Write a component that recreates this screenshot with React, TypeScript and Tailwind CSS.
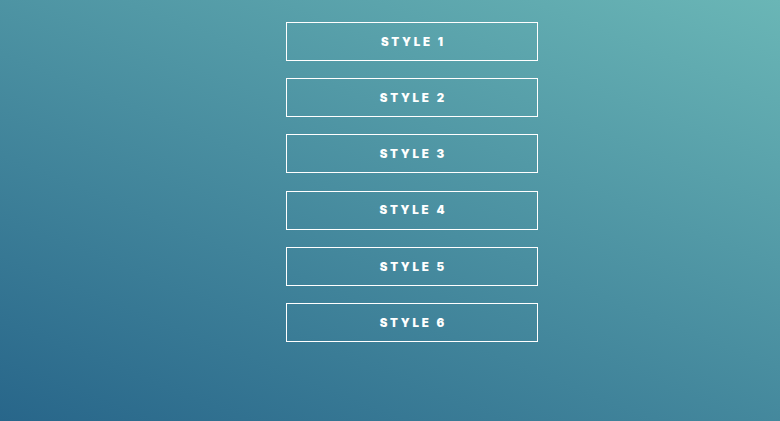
const STYLES = ["Style 1", "Style 2", "Style 3", "Style 4", "Style 5", "Style 6"];

export default function App() {
  return (
    <div className="min-h-[421px] w-full bg-linear-[22deg] from-[#28668a] to-[#6ab6b6] pt-[22px] pl-[44px] flex flex-col items-center gap-[17.2px]">
      {STYLES.map(label => (
        <button
          key={label}
          className="w-[252px] h-[39px] border border-white bg-transparent text-white uppercase font-black text-[11.5px] leading-none tracking-[0.24em] pl-[0.24em] pt-[2px] flex items-center justify-center"
          style={{ fontFamily: "Inter, 'Noto Sans', sans-serif" }}
        >
          {label}
        </button>
      ))}
    </div>
  );
}
